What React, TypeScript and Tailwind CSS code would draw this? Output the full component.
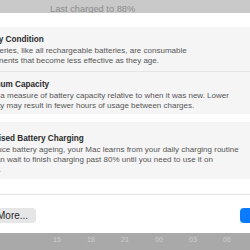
import React from "react";

const font = { fontFamily: '"Liberation Sans", Arial, sans-serif' };

const hours = ["15", "18", "21", "00", "03", "06"];

export default function App() {
  return (
    <div
      className="w-[250px] h-[250px] overflow-hidden bg-[#a9a9a9] flex flex-col"
      style={font}
    >
      {/* background window, top */}
      <div className="h-[13px] shrink-0 bg-[#c9c9c9] relative overflow-hidden">
        <div className="absolute left-[50px] top-[3px] text-[9.3px] leading-[12px] text-[#8c8c8c] whitespace-nowrap">
          Last charged to 88%
        </div>
      </div>

      {/* sheet */}
      <div className="h-[220px] shrink-0 bg-white flex flex-col -ml-[45px] w-[330px] px-[10px] pt-[14px]">
        <div className="h-[87px] rounded-[6px] bg-[#f5f5f5] px-[10px]">
          <div className="h-[45px] pt-[7px] border-b border-[#e4e4e4]">
            <div className="flex justify-between items-center h-[12px]">
              <span className="text-[8.2px] font-bold text-[#2a2a2a]">Battery Condition</span>
              <span className="text-[8.5px] text-[#8a8a8a] mr-[-14px]">Normal</span>
            </div>
            <p className="text-[8px] leading-[10px] text-[#555555] whitespace-nowrap">
              All batteries, like all rechargeable batteries, are consumable
              <br />
              components that become less effective as they age.
            </p>
          </div>
          <div className="pt-[7px]">
            <div className="h-[12px] flex items-center">
              <span className="text-[8.2px] font-bold text-[#2a2a2a]">Maximum Capacity</span>
            </div>
            <p className="text-[8px] leading-[10px] text-[#555555] whitespace-nowrap">
              This is a measure of battery capacity relative to when it was new. Lower
              <br />
              capacity may result in fewer hours of usage between charges.
            </p>
          </div>
        </div>

        <div className="mt-[8px] h-[57px] rounded-[6px] bg-[#f5f5f5] px-[10px] pt-[11px] overflow-hidden">
          <div className="h-[12px] flex items-center">
            <span className="text-[8.2px] font-bold text-[#2a2a2a]">Optimised Battery Charging</span>
          </div>
          <p className="text-[8px] leading-[10px] text-[#555555] whitespace-nowrap">
            To reduce battery ageing, your Mac learns from your daily charging routine
            <br />
            so it can wait to finish charging past 80% until you need to use it on
            <br />
            battery.
          </p>
        </div>

        <div className="mt-[15px] -mx-[10px] border-t border-[#e3e3e3] flex items-center pt-[13px] pl-[34px] pr-[10px]">
          <div className="h-[15px] px-[8px] rounded-[4px] bg-[#e6e6e6] text-[10px] leading-[15px] text-[#2a2a2a]">
            More...
          </div>
          <div className="ml-auto h-[15px] w-[35px] rounded-[4px] bg-[#0a7bff]" />
        </div>
      </div>

      {/* background window, bottom axis */}
      <div className="flex-1 relative">
        {hours.map((h, i) => (
          <span
            key={h}
            className="absolute top-[3px] text-[7px] leading-[8px] text-[#cfcfcf] -translate-x-1/2"
            style={{ left: 57 + i * 34 }}
          >
            {h}
          </span>
        ))}
      </div>
    </div>
  );
}
